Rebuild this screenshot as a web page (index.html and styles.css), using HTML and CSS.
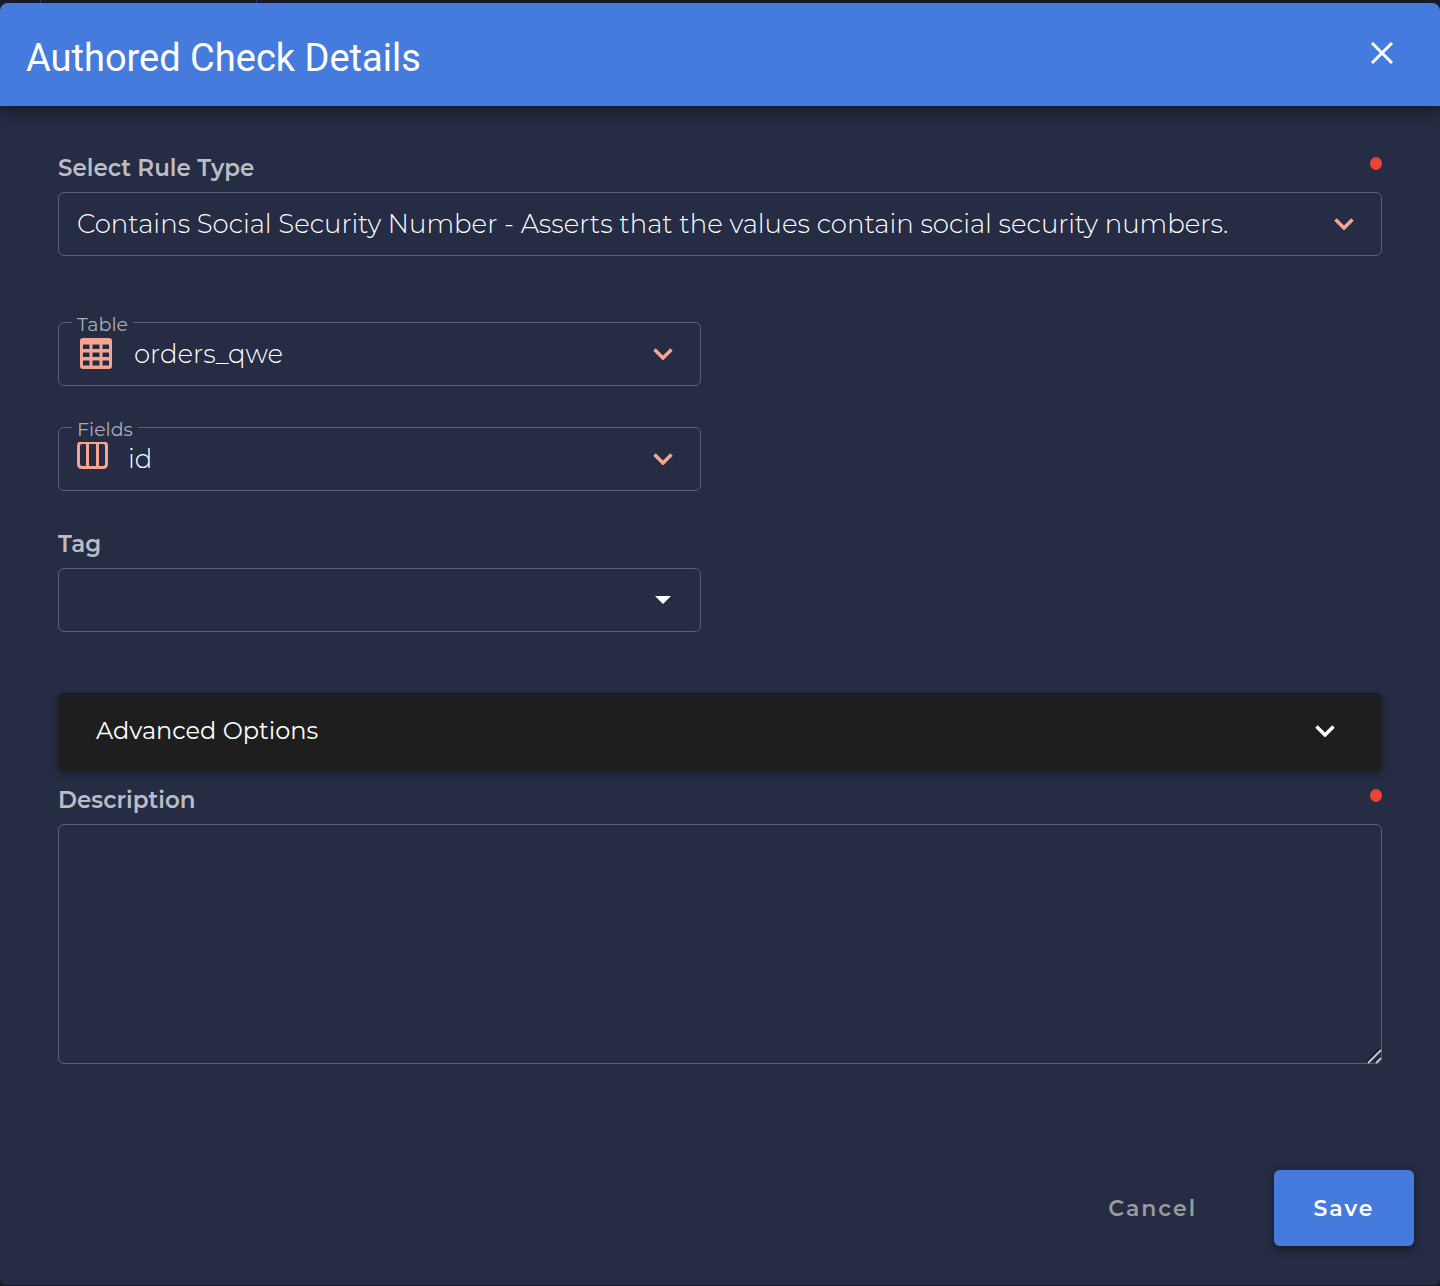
FILE: index.html
```html
<!DOCTYPE html>
<html lang="en">
<head>
<meta charset="utf-8">
<meta name="viewport" content="width=device-width, initial-scale=1">
<title>Authored Check Details</title>
<link rel="stylesheet" href="styles.css">
</head>
<body>
<div class="backdrop"></div>
<main class="dialog" role="dialog" aria-labelledby="dialog-title">
  <header class="dialog-header">
    <h1 class="dialog-title" id="dialog-title">Authored Check Details</h1>
    <button class="close" type="button" aria-label="Close">
      <svg width="24" height="24" viewBox="0 0 24 24"><path d="M2 2 22 22M22 2 2 22" fill="none" stroke="currentColor" stroke-width="3"/></svg>
    </button>
  </header>
  <form class="form">
    <div class="field">
      <div class="label-row"><label class="label" for="rule">Select Rule Type</label><span class="required"></span></div>
      <div class="control">
        <select class="input" id="rule"><option>Contains Social Security Number - Asserts that the values contain social security numbers.</option></select>
        <svg class="arrow accent" width="20" height="12" viewBox="0 0 20 12"><path d="M1.500 1.500 10 10 18.500 1.500" fill="none" stroke="currentColor" stroke-width="3.500"/></svg>
      </div>
    </div>
    <div class="columns">
      <div class="control">
        <label class="float-label" for="table">Table</label>
        <svg class="lead table-icon accent" width="32" height="31" viewBox="0 0 32 31"><path fill="currentColor" fill-rule="evenodd" d="M3 0H29Q32 0 32 3V28Q32 31 29 31H3Q0 31 0 28V3Q0 0 3 0ZM3 6.500V11H9.500V6.500ZM12.500 6.500V11H19.500V6.500ZM22.500 6.500V11H29V6.500ZM3 14.500V19H9.500V14.500ZM12.500 14.500V19H19.500V14.500ZM22.500 14.500V19H29V14.500ZM3 22.500V27.500H9.500V22.500ZM12.500 22.500V27.500H19.500V22.500ZM22.500 22.500V27.500H29V22.500Z"/></svg>
        <select class="input table-select" id="table"><option>orders_qwe</option></select>
        <svg class="arrow accent" width="20" height="12" viewBox="0 0 20 12"><path d="M1.500 1.500 10 10 18.500 1.500" fill="none" stroke="currentColor" stroke-width="3.500"/></svg>
      </div>
      <div class="control">
        <label class="float-label" for="fields">Fields</label>
        <svg class="lead fields-icon accent" width="31" height="28" viewBox="0 0 31 28"><path d="M5 1.500H26Q29.500 1.500 29.500 5V23Q29.500 26.500 26 26.500H5Q1.500 26.500 1.500 23V5Q1.500 1.500 5 1.500ZM10.500 1.500V26.500M20.500 1.500V26.500" fill="none" stroke="currentColor" stroke-width="3"/></svg>
        <select class="input fields-select" id="fields"><option>id</option></select>
        <svg class="arrow accent" width="20" height="12" viewBox="0 0 20 12"><path d="M1.500 1.500 10 10 18.500 1.500" fill="none" stroke="currentColor" stroke-width="3.500"/></svg>
      </div>
      <div class="field">
        <div class="label-row"><label class="label" for="tag">Tag</label></div>
        <div class="control">
          <select class="input" id="tag"><option></option></select>
          <svg class="arrow" width="20" height="8" viewBox="0 0 20 8"><path d="M2 0H18L10 8Z" fill="currentColor"/></svg>
        </div>
      </div>
    </div>
    <button class="accordion" type="button" aria-expanded="false">
      <span>Advanced Options</span>
      <svg width="20" height="12" viewBox="0 0 20 12"><path d="M1.500 1.500 10 10 18.500 1.500" fill="none" stroke="currentColor" stroke-width="3.500"/></svg>
    </button>
    <div class="field description">
      <div class="label-row"><label class="label" for="description">Description</label><span class="required"></span></div>
      <div class="control">
        <textarea class="input textarea" id="description"></textarea>
        <svg class="grip" width="15" height="15" viewBox="0 0 15 15"><path d="M0 13 13 0M8 13 13 8" stroke="#10131d" stroke-width="2"/><path d="M1 14 14 1M9 14 14 9" stroke="#c4c5c8" stroke-width="2"/></svg>
      </div>
    </div>
    <footer class="actions">
      <button class="button" type="button">Cancel</button>
      <button class="button primary" type="submit">Save</button>
    </footer>
  </form>
</main>
</body>
</html>
```
FILE: styles.css
```css
* { box-sizing: border-box; }

body {
  margin: 0;
  background: #1b1e29;
  color: #fff;
  font-family: Montserrat, Inter, sans-serif;
}

/* Strip of the page left visible above the dialog */
.backdrop {
  width: 217px;
  height: 3px;
  margin-left: 40px;
  border: solid #2b4680;
  border-width: 0 1px;
}

.dialog {
  background: #252c44;
  border-radius: 8px;
}

.dialog-header {
  display: flex;
  justify-content: space-between;
  align-items: center;
  height: 103px;
  padding: 0 26px;
  background: #467bde;
  border-radius: 8px 8px 0 0;
  box-shadow: 0 4px 16px rgba(0, 0, 0, 0.5);
}

.dialog-title {
  margin: 6px 0 0;
  font: 400 38px/48px Roboto, sans-serif;
}

.close {
  display: grid;
  place-items: center;
  width: 64px;
  height: 64px;
  margin: 0 0 4px;
  padding: 0;
  border: 0;
  background: none;
  color: inherit;
}

.form {
  padding: 50px 26px 39px;
}

.form > * { margin: 0 32px; }

.label-row {
  display: flex;
  justify-content: space-between;
  height: 36px;
}

.label {
  color: #bbbdc4;
  font-weight: 600;
  font-size: 23px;
  line-height: 24px;
}

.required {
  width: 12px;
  height: 13px;
  margin-top: 1px;
  border-radius: 50%;
  background: #ef4338;
}

.control {
  position: relative;
  display: grid;
  align-items: center;
}

.control > * { grid-area: 1 / 1; }

.input {
  width: 100%;
  height: 64px;
  padding: 0 72px 0 18px;
  border: 1px solid #5a6074;
  border-radius: 6px;
  appearance: none;
  background: none;
  color: #fff;
  font: 300 26px/32px Montserrat, Inter, sans-serif;
}

.table-select { padding-left: 75px; }
.fields-select { padding-left: 69px; }

.arrow {
  justify-self: end;
  margin-right: 28px;
  pointer-events: none;
}

.accent { color: #f4a592; }

.lead { pointer-events: none; }
.table-icon { margin: 0 0 2px 22px; }
.fields-icon { margin: 0 0 8px 19px; }

.float-label {
  position: absolute;
  top: -9px;
  left: 14px;
  padding: 0 5px;
  background: #252c44;
  color: #a9acb6;
  font-size: 19px;
  line-height: 24px;
}

.columns {
  display: grid;
  width: calc(50% - 51px);
  row-gap: 41px;
}

.form > .columns { margin-top: 66px; }

.form > .accordion {
  display: flex;
  justify-content: space-between;
  align-items: center;
  width: calc(100% - 64px);
  height: 78px;
  margin-top: 61px;
  padding: 0 47px 2px 38px;
  border: 0;
  border-radius: 6px;
  background: #1e1e1e;
  box-shadow: 0 2px 6px rgba(0, 0, 0, 0.4);
  color: #fff;
  font: 400 24px/32px Montserrat, Inter, sans-serif;
}

.form > .description { margin-top: 17px; }

.textarea {
  height: 240px;
  padding: 16px 18px;
  resize: none;
}

.grip {
  align-self: end;
  justify-self: end;
  pointer-events: none;
}

.form > .actions {
  display: flex;
  justify-content: flex-end;
  gap: 38px;
  margin: 106px 0 0;
}

.button {
  height: 76px;
  padding: 2px 39px 0;
  border: 0;
  border-radius: 6px;
  background: none;
  color: #9b9b9b;
  font: 600 22px/32px Montserrat, Inter, sans-serif;
  letter-spacing: 2px;
}

.primary {
  min-width: 140px;
  background: #467bde;
  box-shadow: 0 3px 8px rgba(0, 0, 0, 0.45);
  color: #fff;
}
```
